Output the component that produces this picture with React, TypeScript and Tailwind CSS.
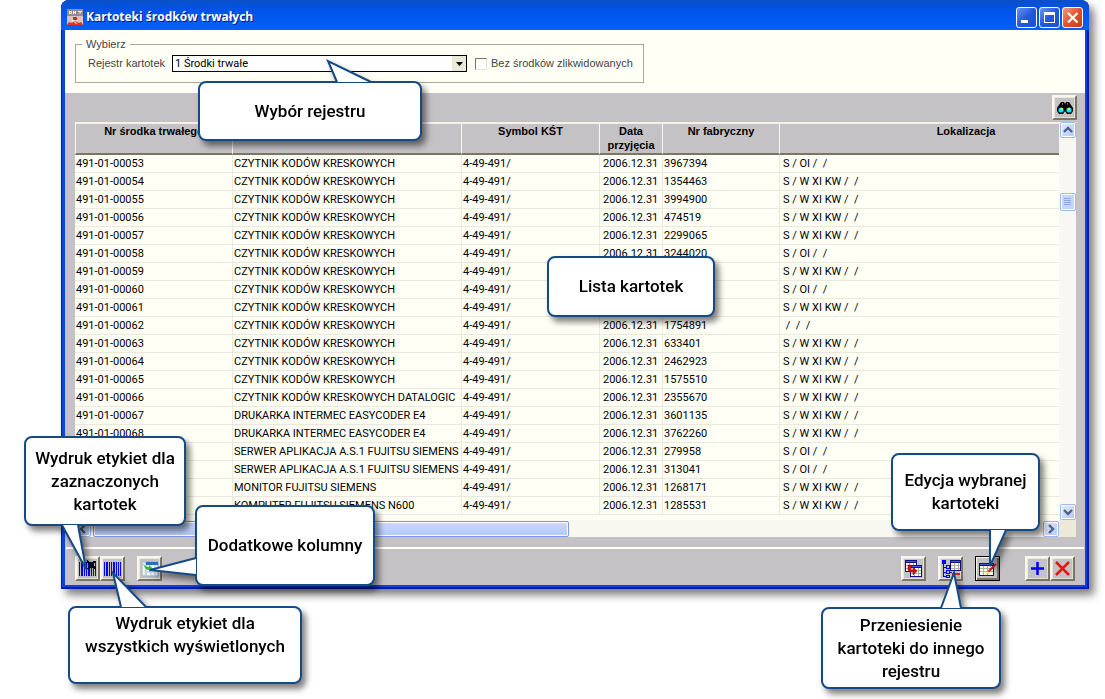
import React from "react";

type Row = { nr: string; name: string; date: string; serial: string; place: string };

const reader = "CZYTNIK KODÓW KRESKOWYCH";
const printer = "DRUKARKA INTERMEC EASYCODER E4";
const server = "SERWER APLIKACJA A.S.1 FUJITSU SIEMENS T";
const kw = "S / W XI KW /  /";
const oi = "S / OI /  /";
const day = "2006.12.31";

const rows: Row[] = [
  { nr: "491-01-00053", name: reader, date: day, serial: "3967394", place: oi },
  { nr: "491-01-00054", name: reader, date: day, serial: "1354463", place: kw },
  { nr: "491-01-00055", name: reader, date: day, serial: "3994900", place: kw },
  { nr: "491-01-00056", name: reader, date: day, serial: "474519", place: kw },
  { nr: "491-01-00057", name: reader, date: day, serial: "2299065", place: kw },
  { nr: "491-01-00058", name: reader, date: day, serial: "3244020", place: oi },
  { nr: "491-01-00059", name: reader, date: "", serial: "", place: kw },
  { nr: "491-01-00060", name: reader, date: "", serial: "", place: oi },
  { nr: "491-01-00061", name: reader, date: "", serial: "", place: kw },
  { nr: "491-01-00062", name: reader, date: day, serial: "1754891", place: " /  /  /" },
  { nr: "491-01-00063", name: reader, date: day, serial: "633401", place: kw },
  { nr: "491-01-00064", name: reader, date: day, serial: "2462923", place: kw },
  { nr: "491-01-00065", name: reader, date: day, serial: "1575510", place: kw },
  { nr: "491-01-00066", name: reader + " DATALOGIC", date: day, serial: "2355670", place: kw },
  { nr: "491-01-00067", name: printer, date: day, serial: "3601135", place: kw },
  { nr: "491-01-00068", name: printer, date: day, serial: "3762260", place: kw },
  { nr: "", name: server, date: day, serial: "279958", place: oi },
  { nr: "", name: server, date: day, serial: "313041", place: oi },
  { nr: "", name: "MONITOR FUJITSU SIEMENS", date: day, serial: "1268171", place: kw },
  { nr: "", name: "KOMPUTER FUJITSU SIEMENS N600", date: day, serial: "1285531", place: kw },
];

const columns = [
  { title: "Nr środka trwałego", width: "w-[158px]" },
  { title: "", width: "w-[229px]" },
  { title: "Symbol KŚT", width: "w-[138px]" },
  { title: "Data przyjęcia", width: "w-[63px]" },
  { title: "Nr fabryczny", width: "w-[117px]" },
  { title: "Lokalizacja", width: "" },
];

function ToolButton({ label, active, children }: { label: string; active?: boolean; children: React.ReactNode }) {
  return (
    <button
      type="button"
      aria-label={label}
      className={
        "flex size-[25px] shrink-0 items-center justify-center bg-[#c5c2c5] " +
        (active
          ? "border border-black shadow-[inset_1px_1px_0_#f8f6ee,inset_-2px_-2px_0_#7b7565]"
          : "border-2 border-t-[#f8f6ee] border-r-[#7b7565] border-b-[#7b7565] border-l-[#f8f6ee] shadow-[inset_1px_1px_0_#ece9d8,inset_-1px_-1px_0_#e4dfd0]")
      }
    >
      {children}
    </button>
  );
}

function ScrollButton({ label, d }: { label: string; d: string }) {
  return (
    <button
      type="button"
      aria-label={label}
      className="flex size-4 shrink-0 items-center justify-center rounded-xs border border-[#9db9ee] bg-linear-to-br from-[#e1eafe] to-[#b3c9fa] shadow-[inset_0_0_0_1px_#ffffff]"
    >
      <svg width="10" height="10" viewBox="0 0 10 10" fill="none" stroke="#4d6185" strokeWidth="2.4">
        <path d={d} />
      </svg>
    </button>
  );
}

function Callout({ place, text, tail }: { place: string; text: string; tail?: string }) {
  return (
    <div
      className={
        "absolute z-10 flex justify-center rounded-lg border-2 border-[#144b87] bg-white text-center font-['Roboto','Liberation_Sans',sans-serif] text-[17px] leading-[23px] font-medium text-black drop-shadow-[4px_5px_3px_rgba(0,0,0,0.5)] " +
        place
      }
    >
      {tail && (
        <svg className="absolute -top-0.5 -left-0.5 overflow-visible" width="1" height="1" fill="#fff">
          <path d={tail} stroke="#144b87" strokeWidth="2" />
        </svg>
      )}
      <span className="relative whitespace-pre">{text}</span>
    </div>
  );
}

const BarcodeIcon = ({ crossed }: { crossed?: boolean }) => (
  <svg width="19" height="17" viewBox="0 0 19 17" shapeRendering="crispEdges">
    <path d="M1 2h1v14H1zM3 2h2v14H3zM6 2h1v14H6zM8 2h1v14H8zM10 2h2v14h-2zM13 2h1v14h-1zM15 2h1v14h-1zM17 2h1v14h-1z" fill="#0000f5" />
    {crossed && <path d="M9 1l9 8M17 1l-7 8" stroke="#000" strokeWidth="2.4" />}
  </svg>
);

const Grid = ({ x, y, w, h }: { x: number; y: number; w: number; h: number }) => (
  <g transform={`translate(${x} ${y})`} shapeRendering="crispEdges">
    <rect x="0.5" y="0.5" width={w - 1} height={h - 1} fill="#fffff0" stroke="#101080" />
    <path d={`M1 5.500h${w - 2}M1 8.500h${w - 2}M4.500 3v${h - 4}M8.500 3v${h - 4}`} stroke="#b0b0a0" />
    <path d={`M0 1.500h${w}`} stroke="#101080" strokeWidth="3" />
    <path d={`M1 1.500h${w - 2}`} stroke="#4858d8" />
  </g>
);

export default function App() {
  return (
    <div className="relative min-h-screen overflow-hidden bg-white font-['Roboto','Liberation_Sans',sans-serif] text-[11px] text-black">
      <main className="mr-4 ml-[61px] rounded-t-lg bg-[#0a45e0] px-1 pb-1 shadow-[inset_1px_0_0_#0019cf,inset_-2px_-2px_0_#001ca5,5px_6px_8px_rgba(0,0,0,0.5)]">
        <header className="-mx-1 flex h-[30px] items-center rounded-t-lg bg-linear-to-b from-[#0a50c8] via-[#0053ee] via-40% to-[#0362f5] px-1.5 pt-1">
          <svg width="16" height="16" viewBox="0 0 16 16" className="shrink-0">
            <rect width="16" height="16" fill="#d8c4c0" />
            <rect width="16" height="7" fill="#968a8a" />
            <path d="M2.500 2.500h2v2h-2zM6.500 5V2l2 3V2M11 2.500h4M13 2v3" stroke="#eee" fill="none" />
            <path d="M6 8h4v3H6z" fill="#d62a1c" />
            <path d="M0 16l2-3 3 1 2-2 3 1 2 1 2-1 2 3z" fill="#e03020" />
            <path d="M5 11l5 4" stroke="#fff" />
          </svg>
          <h1 className="ml-[3px] font-['Open_Sans','Noto_Sans',sans-serif] text-[12px] leading-4 font-bold text-white [text-shadow:1px_1px_0_#0a1883]">
            Kartoteki środków trwałych
          </h1>
          <div className="ml-auto flex gap-0.5">
            <button type="button" aria-label="Minimalizuj" className="size-[21px] rounded-[3px] border border-white bg-linear-to-br from-[#6c93f0] via-[#2458dc] to-[#1c4fd0]">
              <svg width="19" height="19"><path d="M4 12h7v3H4z" fill="#fff" /></svg>
            </button>
            <button type="button" aria-label="Maksymalizuj" className="size-[21px] rounded-[3px] border border-white bg-linear-to-br from-[#6c93f0] via-[#2458dc] to-[#1c4fd0]">
              <svg width="19" height="19" fill="none" stroke="#fff" shapeRendering="crispEdges"><path d="M4.500 5.500h10v9h-10z" /><path d="M4 5h11" strokeWidth="3" /></svg>
            </button>
            <button type="button" aria-label="Zamknij" className="size-[21px] rounded-[3px] border border-white bg-linear-to-br from-[#f09a80] via-[#e2512c] to-[#cc3a12]">
              <svg width="19" height="19" stroke="#fff" strokeWidth="2.2"><path d="M5 5l9.500 9.500M14.500 5L5 14.500" /></svg>
            </button>
          </div>
        </header>

        <section className="flex bg-[#fffff5] px-2.5 pt-[7px] pb-2.5 text-[#444]">
          <fieldset className="border border-[#aca899] pr-1.5 pb-2.5 pl-3 font-['Liberation_Sans',sans-serif]">
            <legend className="-ml-1.5 px-1 leading-[14px]">Wybierz</legend>
            <div className="flex items-center pt-1">
              <label htmlFor="register" className="w-21 leading-[17px]">Rejestr kartotek</label>
              <div className="relative w-[295px]">
                <select id="register" className="block h-[17px] w-full appearance-none border border-black bg-white pl-0.5 font-['Roboto',sans-serif] leading-[15px] text-black">
                  <option>1 Środki trwałe</option>
                </select>
                <svg className="pointer-events-none absolute top-px right-px" width="14" height="15" viewBox="0 0 14 15">
                  <rect width="14" height="15" fill="#ece9d8" />
                  <path d="M4 6h7l-3.500 4z" fill="#000" />
                </svg>
              </div>
              <input id="liquidated" type="checkbox" className="ml-2 size-3 appearance-none border border-t-[#7b7565] border-r-[#e8e4d8] border-b-[#e8e4d8] border-l-[#7b7565] bg-white" />
              <label htmlFor="liquidated" className="ml-1 pr-1 leading-[17px]">Bez środków zlikwidowanych</label>
            </div>
          </fieldset>
        </section>

        <section className="bg-[#c5c2c5] pt-0.5 pb-1">
          <div className="mb-0.5 flex justify-end pr-2">
            <ToolButton label="Szukaj">
              <svg width="18" height="14" viewBox="0 0 18 14">
                <path d="M5 1h3l1 2 1-2h3l2 3 2 3v3l-2 3h-4l-2-3-2 3H3l-2-3V7l2-3z" fill="#000" />
                <circle cx="5" cy="9" r="2.600" fill="#00e8f0" /><circle cx="13" cy="9" r="2.600" fill="#00e8f0" />
                <path d="M5 7h2v2H5zM12 7h2v2h-2z" fill="#f4e84a" />
                <path d="M6 3h1M11 3h1" stroke="#ccc" />
              </svg>
            </ToolButton>
          </div>

          <div className="mr-[9px] ml-2.5 grid grid-cols-[minmax(0,1fr)_17px]">
            <div className="overflow-hidden bg-[#fffff5] pb-[5px]">
              <table className="w-[1078px] min-w-full table-fixed border-separate border-spacing-0">
                <thead>
                  <tr>
                    {columns.map((c, i) => (
                      <th
                        key={i}
                        scope="col"
                        className={`h-[33px] border-t-2 border-r border-b-2 border-t-[#f5f0e8] border-r-[#fbf8f0] border-b-[#7b7565] bg-[#c5c2c5] p-0 align-top font-['Liberation_Sans',sans-serif] leading-[14px] font-bold first:border-l first:border-l-[#fbf8f0] ${c.width}`}
                      >
                        {c.title}
                      </th>
                    ))}
                  </tr>
                </thead>
                <tbody>
                  {rows.map((r, i) => (
                    <tr key={i} className="*:h-[18px] *:overflow-hidden *:border-r *:border-b *:border-[#ece9dc] *:p-0 *:pt-px *:pl-px *:leading-4 *:whitespace-pre">
                      <td>{r.nr}</td>
                      <td>{r.name}</td>
                      <td>4-49-491/</td>
                      <td><span className="pl-0.5">{r.date}</span></td>
                      <td>{r.serial}</td>
                      <td><span className="pl-0.5">{r.place}</span></td>
                    </tr>
                  ))}
                </tbody>
              </table>
            </div>
            <div className="flex flex-col items-center bg-[#f8f7f2]">
              <ScrollButton label="W górę" d="M1 7l4-4 4 4" />
              <div className="flex-1 pt-[55px]">
                <div className="flex h-[18px] w-4 items-center justify-center rounded-xs border border-[#9db9ee] bg-[#c5d5fc] shadow-[inset_0_0_0_1px_#ffffff]">
                  <svg width="7" height="8" stroke="#8ba6e0" shapeRendering="crispEdges"><path d="M0 .5h7M0 2.500h7M0 4.500h7M0 6.500h7" /></svg>
                </div>
              </div>
              <ScrollButton label="W dół" d="M1 3l4 4 4-4" />
            </div>
            <div className="flex h-[17px] items-center bg-[#f8f7f2]">
              <ScrollButton label="W lewo" d="M7 1L3 5l4 4" />
              <div className="min-w-0 flex-1">
                <div className="ml-0.5 h-4 w-1/2 rounded-xs border border-[#7a9be0] bg-linear-to-b from-[#cbd9ff] to-[#b3c9fa] shadow-[inset_0_0_0_1px_#ffffff]" />
              </div>
              <ScrollButton label="W prawo" d="M3 1l4 4-4 4" />
            </div>
            <div className="bg-[#ece9d8]" />
          </div>

          <div className="mx-px mt-2.5 h-0.5 bg-[#fffff5]" />

          <div className="mt-[7px] mr-2.5 ml-2.5 flex">
            <ToolButton label="Wydruk etykiet dla zaznaczonych"><BarcodeIcon crossed /></ToolButton>
            <ToolButton label="Wydruk etykiet dla wszystkich"><BarcodeIcon /></ToolButton>
            <div className="ml-3">
              <ToolButton label="Dodatkowe kolumny">
                <svg width="18" height="18" viewBox="0 0 18 18">
                  <path d="M1 2h7v14H1z" fill="#eef0f0" stroke="#a8b4c0" />
                  <path d="M5 2h12v14H5z" fill="#f4f8fc" stroke="#8fb0d4" />
                  <path d="M5 2h12v3H5z" fill="#2e6cb8" />
                  <path d="M6 9h11M6 12h11M10 5v11M14 5v11" stroke="#b8cce0" />
                  <path d="M2 3c1 3 4 4 6 4V5l4 4-4 3v-2C5 10 3 7 2 3z" fill="#34b838" />
                </svg>
              </ToolButton>
            </div>
            <div className="ml-auto flex gap-3">
              <ToolButton label="Kopiuj kartotekę">
                <svg width="19" height="19" viewBox="0 0 19 19">
                  <Grid x={1} y={1} w={12} h={12} /><Grid x={6} y={6} w={12} h={12} />
                  <path d="M4 6h3v5h2V8l4 4-4 4v-3H6l-2-2z" fill="#d80c18" stroke="#700" strokeWidth="0.5" />
                </svg>
              </ToolButton>
              <ToolButton label="Przenieś kartotekę">
                <svg width="20" height="20" viewBox="0 0 20 20" shapeRendering="crispEdges">
                  <path d="M1 1h4v4H1z" fill="#0000f0" />
                  <path d="M2.500 5v13M3 8.500h2M3 13h2M3 17.500h2M9 8.500h2M9 13h2" stroke="#0000f0" fill="none" />
                  <path d="M5.500 6.500h3v3h-3zM5.500 11.500h3v3h-3zM5.500 16.500h3v2h-3z" stroke="#0000f0" fill="none" />
                  <Grid x={9} y={1} w={11} h={11} />
                  <path d="M10 15l4-3v2h5v2h-5v3z" fill="#f01818" />
                </svg>
              </ToolButton>
              <ToolButton label="Edytuj kartotekę" active>
                <svg width="20" height="18" viewBox="0 0 20 18">
                  <Grid x={1} y={3} w={15} h={13} />
                  <path d="M10 12l8-8" stroke="#e81818" strokeWidth="2" />
                  <path d="M7 14l3-3 1 2z" fill="#f8f000" />
                </svg>
              </ToolButton>
            </div>
            <div className="ml-[25px] flex">
              <ToolButton label="Dodaj">
                <svg width="17" height="17" stroke="#0000f5" strokeWidth="2.500"><path d="M8.500 2v13M2 8.500h13" /></svg>
              </ToolButton>
              <ToolButton label="Usuń">
                <svg width="17" height="17" stroke="#f51010" strokeWidth="2.500"><path d="M2 2l13 13M15 2L2 15" /></svg>
              </ToolButton>
            </div>
          </div>
        </section>
      </main>

      <Callout place="left-[198px] top-[81px] h-[60px] w-[224px] items-center" text="Wybór rejestru" tail="M139 1L130 -20L173 1" />
      <Callout place="left-[547px] top-[256px] h-[61px] w-[168px] items-center" text="Lista kartotek" />
      <Callout place="left-[24px] top-[436px] h-[90px] w-[162px] items-center" text={"Wydruk etykiet dla\nzaznaczonych\nkartotek"} tail="M38 89L62 133L54 89" />
      <Callout place="left-[195px] top-[505px] h-[81px] w-[180px] items-center" text="Dodatkowe kolumny" tail="M1 53L-45 65L1 70" />
      <Callout place="left-[68px] top-[606px] h-[78px] w-[234px] pt-1" text={"Wydruk etykiet dla\nwszystkich wyświetlonych"} tail="M53 1L45 -33L78 1" />
      <Callout place="right-[65px] top-[453px] h-[78px] w-[149px] items-center" text={"Edycja wybranej\nkartoteki"} tail="M99 77L99 113L115 77" />
      <Callout place="right-[104px] top-[607px] h-[82px] w-[180px] items-center" text={"Przeniesienie\nkartoteki do innego\nrejestru"} tail="M120 1L133 -34L140 1" />
    </div>
  );
}
